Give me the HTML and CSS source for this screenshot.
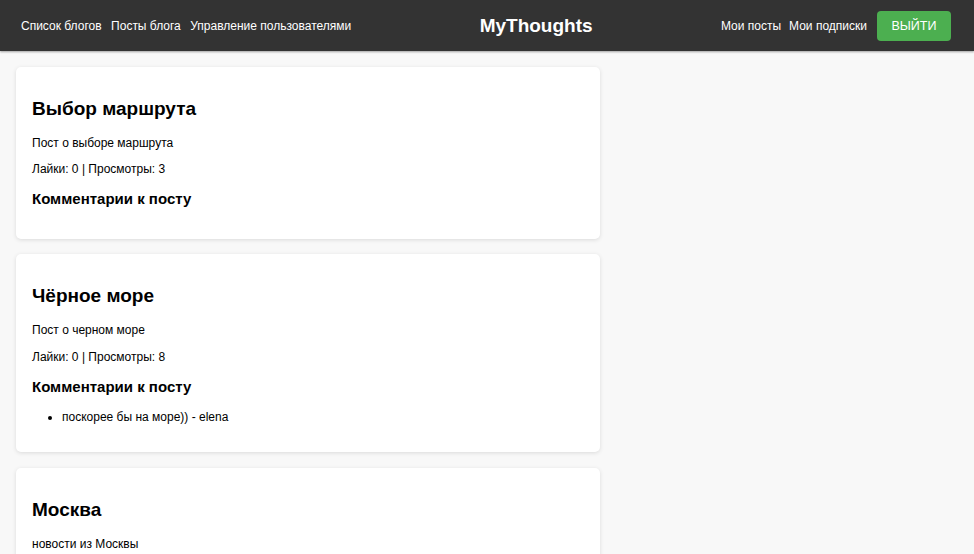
FILE: index.html
```html
<!DOCTYPE html>
<html lang="ru">
<head>
<meta charset="utf-8">
<title>MyThoughts</title>
<link rel="stylesheet" href="styles.css">
</head>
<body>
<header class="topbar">
  <nav class="nav nav-left">
    <a href="#">Список блогов</a>
    <a href="#">Посты блога</a>
    <a href="#">Управление пользователями</a>
  </nav>
  <div class="brand">MyThoughts</div>
  <nav class="nav nav-right">
    <a href="#">Мои посты</a>
    <a href="#">Мои подписки</a>
    <button class="logout">Выйти</button>
  </nav>
</header>
<main class="posts">
  <article class="card">
    <h2>Выбор маршрута</h2>
    <p>Пост о выборе маршрута</p>
    <p>Лайки: 0 | Просмотры: 3</p>
    <h3>Комментарии к посту</h3>
    <ul class="comments"></ul>
  </article>
  <article class="card">
    <h2>Чёрное море</h2>
    <p>Пост о черном море</p>
    <p>Лайки: 0 | Просмотры: 8</p>
    <h3>Комментарии к посту</h3>
    <ul class="comments">
      <li>поскорее бы на море)) - elena</li>
    </ul>
  </article>
  <article class="card">
    <h2>Москва</h2>
    <p>новости из Москвы</p>
    <p>Лайки: 0 | Просмотры: 2</p>
    <h3>Комментарии к посту</h3>
    <ul class="comments"></ul>
  </article>
</main>
</body>
</html>
```
FILE: styles.css
```css
* { box-sizing: border-box; }
body {
  margin: 0;
  font-family: "Liberation Sans", Arial, sans-serif;
  background: #f8f8f8;
  color: #000;
}
.topbar {
  height: 51px;
  background: #333;
  display: flex;
  align-items: center;
  justify-content: space-between;
  padding: 0 23px 0 21px;
  box-shadow: 0 1px 2px rgba(0,0,0,0.35);
}
.nav { display: flex; align-items: center; gap: 8px; }
.nav-left { gap: 9.5px; }
.nav a {
  color: #fff;
  text-decoration: none;
  font-size: 12px;
}
.brand {
  color: #fff;
  font-weight: bold;
  font-size: 19px;
}
.logout {
  margin-left: 2px;
  background: #4caf50;
  color: #fff;
  border: none;
  border-radius: 4px;
  height: 30px;
  padding: 0 14.5px;
  font-family: inherit;
  font-size: 12.5px;
  text-transform: uppercase;
}
.posts {
  width: 584px;
  margin: 16px 0 0 16px;
  display: flex;
  flex-direction: column;
  gap: 15.5px;
}
.card {
  background: #fff;
  border-radius: 5px;
  box-shadow: 0 1px 4px rgba(0,0,0,0.12);
  padding: 16px;
}
.card h2 {
  font-size: 19px;
  line-height: 22px;
  margin: 15px 0 16px;
}
.card p {
  font-size: 12px;
  line-height: 14.4px;
  margin: 0 0 12px;
}
.card h3 {
  font-size: 15px;
  line-height: 17px;
  margin: 13.5px 0 15.5px;
}
.comments {
  font-size: 12px;
  line-height: 14.4px;
  margin: 0 0 11.5px;
  padding-left: 30px;
}
```
